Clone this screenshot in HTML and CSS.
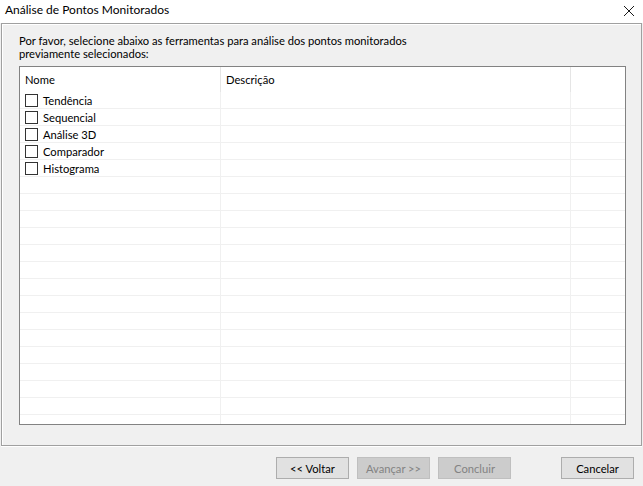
FILE: index.html
```html
<!DOCTYPE html>
<html lang="pt">
<head>
<meta charset="utf-8">
<title>Análise de Pontos Monitorados</title>
<link rel="stylesheet" href="styles.css">
</head>
<body>
<div class="window">
  <div class="titlebar">
    <span class="title">Análise de Pontos Monitorados</span>
    <svg class="close" width="12" height="12" viewBox="0 0 12 12"><path d="M1 1 L11 11 M11 1 L1 11" stroke="#1a1a1a" stroke-width="1" fill="none"/></svg>
  </div>
  <div class="panel">
    <p class="intro">Por favor, selecione abaixo as ferramentas para análise dos pontos monitorados<br>previamente selecionados:</p>
    <div class="list">
      <div class="header">
        <div class="hcell c1">Nome</div>
        <div class="hcell c2">Descrição</div>
        <div class="hcell c3"></div>
      </div>
      <div class="rows">
        <div class="row"><div class="cell c1"><span class="box"></span>Tendência</div><div class="cell c2"></div><div class="cell c3"></div></div>
        <div class="row"><div class="cell c1"><span class="box"></span>Sequencial</div><div class="cell c2"></div><div class="cell c3"></div></div>
        <div class="row"><div class="cell c1"><span class="box"></span>Análise 3D</div><div class="cell c2"></div><div class="cell c3"></div></div>
        <div class="row"><div class="cell c1"><span class="box"></span>Comparador</div><div class="cell c2"></div><div class="cell c3"></div></div>
        <div class="row"><div class="cell c1"><span class="box"></span>Histograma</div><div class="cell c2"></div><div class="cell c3"></div></div>
        <div class="row"><div class="cell c1"></div><div class="cell c2"></div><div class="cell c3"></div></div>
        <div class="row"><div class="cell c1"></div><div class="cell c2"></div><div class="cell c3"></div></div>
        <div class="row"><div class="cell c1"></div><div class="cell c2"></div><div class="cell c3"></div></div>
        <div class="row"><div class="cell c1"></div><div class="cell c2"></div><div class="cell c3"></div></div>
        <div class="row"><div class="cell c1"></div><div class="cell c2"></div><div class="cell c3"></div></div>
        <div class="row"><div class="cell c1"></div><div class="cell c2"></div><div class="cell c3"></div></div>
        <div class="row"><div class="cell c1"></div><div class="cell c2"></div><div class="cell c3"></div></div>
        <div class="row"><div class="cell c1"></div><div class="cell c2"></div><div class="cell c3"></div></div>
        <div class="row"><div class="cell c1"></div><div class="cell c2"></div><div class="cell c3"></div></div>
        <div class="row"><div class="cell c1"></div><div class="cell c2"></div><div class="cell c3"></div></div>
        <div class="row"><div class="cell c1"></div><div class="cell c2"></div><div class="cell c3"></div></div>
        <div class="row"><div class="cell c1"></div><div class="cell c2"></div><div class="cell c3"></div></div>
        <div class="row"><div class="cell c1"></div><div class="cell c2"></div><div class="cell c3"></div></div>
        <div class="row"><div class="cell c1"></div><div class="cell c2"></div><div class="cell c3"></div></div>
        <div class="row"><div class="cell c1"></div><div class="cell c2"></div><div class="cell c3"></div></div>
        <div class="row"><div class="cell c1"></div><div class="cell c2"></div><div class="cell c3"></div></div>
      </div>
    </div>
  </div>
  <div class="footer">
    <button class="btn">&lt;&lt; Voltar</button>
    <button class="btn disabled">Avançar &gt;&gt;</button>
    <button class="btn disabled">Concluir</button>
    <span class="spacer"></span>
    <button class="btn">Cancelar</button>
  </div>
</div>
</body>
</html>
```
FILE: styles.css
```css
* { box-sizing: border-box; }
html, body { margin: 0; padding: 0; }
body {
  width: 643px;
  height: 486px;
  overflow: hidden;
  background: #f0f0f0;
  font-family: "Segoe UI", "Lato", "Liberation Sans", sans-serif;
  font-size: 11.2px;
  color: #000;
}
.window { display: flex; flex-direction: column; height: 486px; }
.titlebar {
  height: 23px;
  background: #fff;
  display: flex;
  align-items: center;
  justify-content: space-between;
  padding: 0 8px 4px 5px;
  flex: none;
}
.title { font-size: 12px; line-height: 16px; }
.close { display: block; margin-top: 2px; }
.panel {
  flex: none;
  margin: 0 1px;
  height: 423px;
  border: 1px solid #a0a0a0;
  box-shadow: 0 1px 0 #fff, inset 1px 1px 0 #fff;
  padding: 10px 15px 0 17px;
}
.intro { margin: 0; line-height: 13px; }
.list {
  margin-top: 6px;
  width: 607px;
  height: 359px;
  border: 1px solid #828282;
  background: #fff;
  overflow: hidden;
}
.header { display: flex; height: 25px; }
.hcell { padding: 5px 0 0 5px; line-height: 15px; border-right: 1px solid #e5e5e5; }
.c1 { width: 201px; flex: none; }
.c2 { width: 350px; flex: none; }
.c3 { flex: 1; border-right: none; }
.rows { display: flex; flex-direction: column; }
.row { display: flex; height: 17px; border-bottom: 1px solid #f0f0f0; flex: none; }
.cell { border-right: 1px solid #f0f0f0; display: flex; align-items: center; padding-left: 5px; }
.cell.c3 { border-right: none; }
.box {
  width: 13px;
  height: 13px;
  border: 1px solid #333;
  background: #fff;
  margin-right: 5px;
  flex: none;
}
.footer {
  flex: 1;
  display: flex;
  align-items: flex-start;
  padding: 11px 9px 0 276px;
  gap: 8px;
}
.spacer { flex: 1; }
.btn {
  width: 73px;
  height: 22px;
  border: 1px solid #adadad;
  background: #e1e1e1;
  font-family: inherit;
  font-size: 11.2px;
  color: #000;
  padding: 0;
  margin: 0;
}
.btn.disabled { background: #cccccc; border-color: #bfbfbf; color: #838383; }
```
